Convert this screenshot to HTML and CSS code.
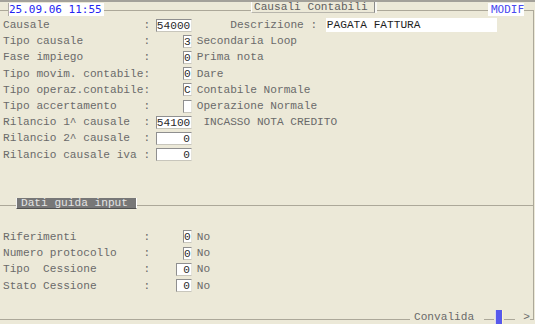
FILE: index.html
```html
<!DOCTYPE html>
<html>
<head>
<meta charset="utf-8">
<link rel="stylesheet" href="styles.css">
</head>
<body>
<div class="screen">
  <div class="frame">
    <div class="header">
      <div class="date">25.09.06 11:55</div>
      <div class="title">Causali Contabili</div>
      <div class="modif">MODIF</div>
    </div>
    <div class="rows">
      <div class="row"><span class="lbl">Causale</span><span class="colon">:</span><span class="field"><span class="box w5">54000</span></span><span class="dlabel">Descrizione :</span><span class="dbox">PAGATA FATTURA</span></div>
      <div class="row"><span class="lbl">Tipo causale</span><span class="colon">:</span><span class="field"><span class="box w1">3</span></span><span class="desc">Secondaria Loop</span></div>
      <div class="row"><span class="lbl">Fase impiego</span><span class="colon">:</span><span class="field"><span class="box w1">0</span></span><span class="desc">Prima nota</span></div>
      <div class="row"><span class="lbl">Tipo movim. contabile</span><span class="colon">:</span><span class="field"><span class="box w1">0</span></span><span class="desc">Dare</span></div>
      <div class="row"><span class="lbl">Tipo operaz.contabile</span><span class="colon">:</span><span class="field"><span class="box w1">C</span></span><span class="desc">Contabile Normale</span></div>
      <div class="row"><span class="lbl">Tipo accertamento</span><span class="colon">:</span><span class="field"><span class="box w1"></span></span><span class="desc">Operazione Normale</span></div>
      <div class="row"><span class="lbl">Rilancio 1^ causale</span><span class="colon">:</span><span class="field"><span class="box w5">54100</span></span><span class="desc"> INCASSO NOTA CREDITO</span></div>
      <div class="row"><span class="lbl">Rilancio 2^ causale</span><span class="colon">:</span><span class="field"><span class="box w5">0</span></span></div>
      <div class="row"><span class="lbl">Rilancio causale iva</span><span class="colon">:</span><span class="field"><span class="box w5">0</span></span></div>
    </div>
    <div class="section"><div class="badge">Dati guida input</div></div>
    <div class="rows2">
      <div class="row"><span class="lbl">Riferimenti</span><span class="colon">:</span><span class="field"><span class="box w1">0</span></span><span class="desc">No</span></div>
      <div class="row"><span class="lbl">Numero protocollo</span><span class="colon">:</span><span class="field"><span class="box w1">0</span></span><span class="desc">No</span></div>
      <div class="row"><span class="lbl">Tipo  Cessione</span><span class="colon">:</span><span class="field"><span class="box w2">0</span></span><span class="desc">No</span></div>
      <div class="row"><span class="lbl">Stato Cessione</span><span class="colon">:</span><span class="field"><span class="box w2">0</span></span><span class="desc">No</span></div>
    </div>
  </div>
  <div class="footer">
    <div class="seg s1"></div>
    <div class="conv">Convalida</div>
    <div class="seg s2"></div>
    <div class="blue"></div>
    <div class="seg s3"></div>
    <div class="gt">&gt;</div>
    <div class="corner"></div>
  </div>
</div>
</body>
</html>
```

FILE: styles.css
```css
* { box-sizing: border-box; }

body {
  margin: 0;
  background: #ece9d8;
  font-family: "Liberation Mono", "Courier New", monospace;
  font-size: 11.15px;
  color: #6a6a6a;
}

.screen {
  width: 535px;
  height: 324px;
  overflow: hidden;
  border-top: 2px solid #a3a19a;
}

.frame {
  margin-top: 8px;
  width: 534px;
  height: 300px;
  border-top: 1px solid #aca899;
  border-right: 1px solid #aca899;
}

.header {
  display: flex;
  align-items: flex-start;
  height: 14px;
  margin-top: -9px;
}

.date {
  margin: 1px 0 0 8px;
  width: 96px;
  height: 13px;
  background: #fff;
  border-left: 1px solid #b0aea6;
  color: #2424f2;
  font-family: "DejaVu Sans Mono", monospace;
  font-size: 11px;
  line-height: 13px;
  white-space: pre;
}

.title {
  margin: -2px 0 0 147px;
  width: 124px;
  height: 13px;
  background: #ece9d8;
  border-left: 1px solid #fff;
  border-right: 1px solid #8a8a8a;
  border-bottom: 1px solid #b7b5ac;
  box-shadow: 2px 0 0 #f8f8f4;
  padding: 2px 0 0 2px;
  line-height: 10px;
  color: #606060;
  white-space: pre;
}

.modif {
  margin: 1px 0 0 113px;
  width: 36px;
  height: 13px;
  background: #fff;
  color: #4a4af0;
  font-family: "DejaVu Sans Mono", monospace;
  font-size: 11px;
  line-height: 13px;
  padding-left: 3px;
}

.rows { margin-top: 1px; }

.row {
  display: flex;
  align-items: center;
  height: 16.2px;
  white-space: pre;
}

.lbl {
  width: calc(21ch + 3px);
  padding-left: 3px;
}

.colon { width: 1ch; }

.field {
  width: 41.8px;
  display: flex;
  justify-content: flex-end;
}

.box {
  height: 13px;
  background: #fff;
  border: 1px solid;
  border-color: #8f8f8f #e6e4da #c8c6bc #8f8f8f;
  color: #2a2a2a;
  text-align: right;
  line-height: 12px;
  padding-right: 1px;
}

.w5 { width: 36px; }
.w2 { width: 16px; }
.w1 { width: 9px; padding: 0; text-align: center; }

.desc { margin-left: 4.9px; }

.dlabel { margin-left: 38.4px; }

.dbox {
  margin-left: 8.7px;
  width: 171px;
  height: 14px;
  background: #fff;
  color: #1e1e1e;
  padding-left: 1px;
  line-height: 15px;
}

.section {
  margin-top: 35.2px;
  height: 11px;
  display: flex;
  background: linear-gradient(#aca899, #aca899) 0 7px / 100% 1px no-repeat;
}

.badge {
  margin-left: 16px;
  width: 121px;
  height: 11px;
  background: #777;
  color: #e4e4e4;
  border-left: 1px solid #f2f2f2;
  border-right: 1px solid #fff;
  border-bottom: 1px solid #505050;
  padding-left: 4px;
  line-height: 10px;
  white-space: pre;
}

.rows2 { margin-top: 20px; }

.footer {
  display: flex;
  height: 14px;
}

.seg {
  height: 10px;
  border-bottom: 1px solid #aca899;
}

.s1 { width: 410px; }
.s2 { width: 10px; }
.s3 { width: 11px; margin-left: 1px; }

.conv {
  margin: 0 10px 0 4px;
  line-height: 14px;
}

.blue {
  margin-left: 1px;
  width: 8px;
  height: 14px;
  background: #5759ec;
  border-left: 1px solid #d8d8f0;
  border-right: 1px solid #fff6cc;
}

.gt {
  margin-left: 8px;
  width: 1ch;
  line-height: 14px;
}

.corner {
  width: 4px;
  height: 10px;
  border-right: 1px solid #aca899;
  border-bottom: 1px solid #aca899;
}
```
